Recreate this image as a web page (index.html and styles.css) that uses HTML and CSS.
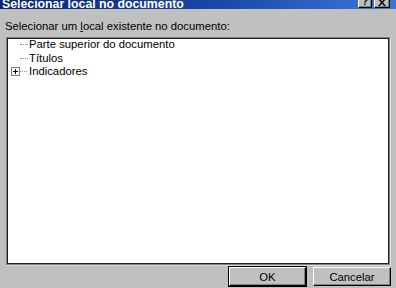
FILE: index.html
```html
<!DOCTYPE html>
<html>
<head>
<meta charset="utf-8">
<link rel="stylesheet" href="styles.css">
</head>
<body>
<div class="window">
  <div class="titlebar">
    <div class="title-text">Selecionar local no documento</div>
    <div class="cap-btns">
      <div class="cap-btn help">?</div>
      <div class="cap-btn close">
        <svg width="8" height="7" viewBox="0 0 8 7"><path d="M0 0L2 0L4 2.5L6 0L8 0L5 3.5L8 7L6 7L4 4.5L2 7L0 7L3 3.5Z" fill="#000"/></svg>
      </div>
    </div>
  </div>
  <div class="content">
    <div class="label">Selecionar um <span class="u">l</span>ocal existente no documento:</div>
    <div class="listbox">
      <div class="row"><span class="leaf-line"></span><span class="item">Parte superior do documento</span></div>
      <div class="row"><span class="leaf-line"></span><span class="item">Títulos</span></div>
      <div class="row"><span class="expander"><svg width="7" height="7" viewBox="0 0 7 7"><path d="M1 3.5H6M3.5 1V6" stroke="#000" stroke-width="1"/></svg></span><span class="exp-line"></span><span class="item">Indicadores</span></div>
    </div>
    <div class="buttons">
      <div class="btn default"><span>OK</span></div>
      <div class="btn"><span>Cancelar</span></div>
    </div>
  </div>
</div>
</body>
</html>
```

FILE: styles.css
```css
html, body {
  margin: 0;
  padding: 0;
}
body {
  width: 396px;
  height: 288px;
  overflow: hidden;
  background: #c0c0c0;
  font-family: "Liberation Sans", Arial, sans-serif;
  font-size: 11.3px;
  color: #000;
}
.window {
  display: flex;
  flex-direction: column;
  height: 288px;
}
.titlebar {
  height: 9px;
  overflow: hidden;
  display: flex;
  justify-content: space-between;
  background: linear-gradient(to right, #0a2470 0%, #1a48a8 55%, #3a78d6 100%);
}
.title-text {
  color: #fff;
  font-weight: bold;
  font-size: 12.3px;
  line-height: 12px;
  margin-top: -2px;
  padding-left: 2px;
  white-space: nowrap;
}
.cap-btns {
  display: flex;
  gap: 2px;
  margin-right: 6px;
  margin-top: -4px;
}
.cap-btn {
  width: 12px;
  height: 10px;
  background: #c0c0c0;
  border-top: 1px solid #fff;
  border-left: 1px solid #fff;
  border-right: 1px solid #000;
  border-bottom: 1px solid #000;
  box-shadow: inset -1px -1px 0 #808080;
  display: flex;
  align-items: center;
  justify-content: center;
}
.cap-btn.help {
  font-weight: bold;
  font-size: 10px;
  line-height: 10px;
}
.cap-btn.close {
  width: 14px;
}
.content {
  display: flex;
  flex-direction: column;
  padding: 0 6px 0 6px;
}
.label {
  line-height: 13px;
  padding-top: 11px;
  margin-left: -1px;
  white-space: nowrap;
}
.u {
  text-decoration: underline;
}
.listbox {
  margin-top: 4px;
  height: 225px;
  background: #fff;
  border: 1px solid #808080;
  box-shadow: inset 0 0 0 1px #202020, 1px 1px 0 #dedede;
  padding: 0 1px 1px 1px;
}
.row {
  display: flex;
  align-items: center;
  height: 13.5px;
  white-space: nowrap;
}
.leaf-line {
  width: 8px;
  margin-left: 12px;
  margin-right: 1px;
  border-top: 1px dotted #909090;
}
.expander {
  width: 7px;
  height: 7px;
  margin-left: 3px;
  border: 1px solid #808080;
  display: flex;
}
.exp-line {
  width: 7px;
  margin-right: 2px;
  border-top: 1px dotted #909090;
}
.item {
  line-height: 13.5px;
}
.buttons {
  display: flex;
  justify-content: flex-end;
  gap: 7px;
  margin-top: 2px;
  margin-right: -1px;
}
.btn {
  width: 76px;
  height: 17px;
  display: flex;
  align-items: center;
  justify-content: center;
  background: #c0c0c0;
  border-top: 1px solid #fff;
  border-left: 1px solid #fff;
  border-right: 1px solid #000;
  border-bottom: 1px solid #000;
  box-shadow: inset -1px -1px 0 #808080;
}
.btn.default {
  outline: 1px solid #000;
  width: 75px;
}
```
